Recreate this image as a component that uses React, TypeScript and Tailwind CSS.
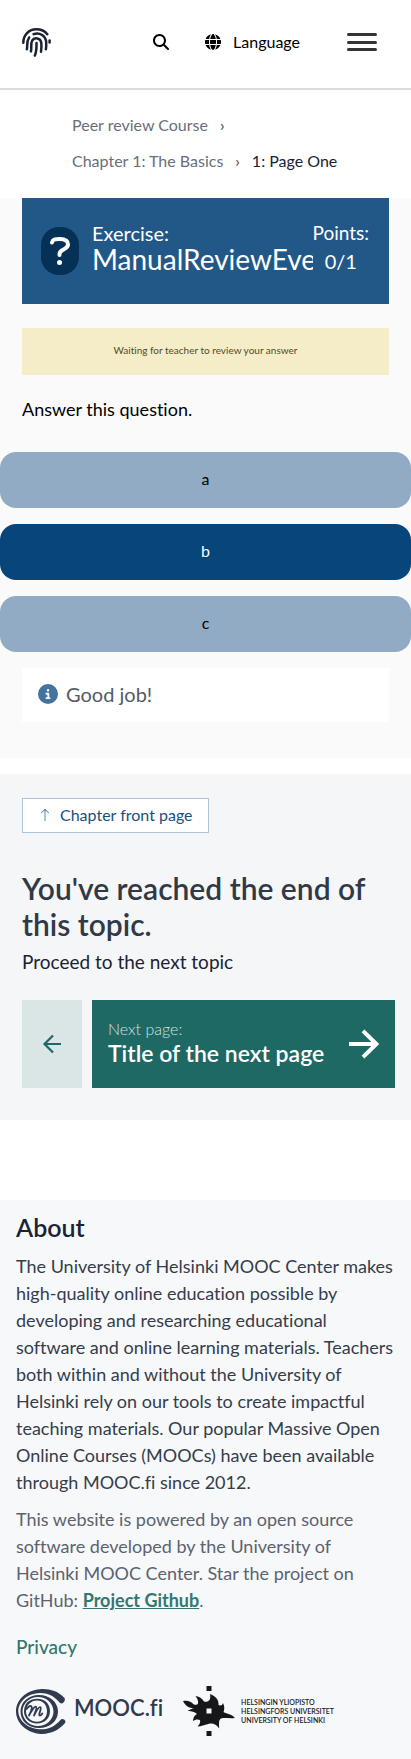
import type { ReactNode } from "react";
import { FaGlobe, FaMagnifyingGlass, FaCircleInfo } from "react-icons/fa6";
import { BsArrowUp } from "react-icons/bs";

const OPTIONS = [
  { label: "a", selected: false },
  { label: "b", selected: true },
  { label: "c", selected: false },
];

function Fingerprint() {
  return (
    <svg width="29" height="29" viewBox="0 0 29 29" fill="none" stroke="#1a2333" strokeWidth="2.5" strokeLinecap="round" aria-hidden="true">
      <path d="M1.3 14.800C1.300 7 6.800 1.300 14.500 1.300c4.400 0 8.200 1.700 10.800 5" />
      <path d="M27.600 12.600v1.800" />
      <path d="M4.900 21.200c.900-3.500-.800-7.400 2.300-11.800" />
      <path d="M11.600 6.100c6.200-2.300 12.300 2 12.600 8.200.1 2.300.1 4.500-.3 6.900" />
      <path d="M8.900 23.400c1.200-4-.8-7.200 1.300-10.900 2.200-3.600 8.600-2.600 9.100 2.300.3 3.200.2 6-.3 8.900" />
      <path d="M12.900 27.600c1.700-4.100 1.700-8 1.600-12.500" />
    </svg>
  );
}

function Arrow({ className, d, viewBox, width }: { className: string; d: string; viewBox: string; width: number }) {
  return (
    <svg className={className} viewBox={viewBox} fill="none" stroke="currentColor" strokeWidth={width} aria-hidden="true">
      <path d={d} />
    </svg>
  );
}

function Crumb({ children }: { children: ReactNode }) {
  return (
    <li className="flex">
      <a href="#" className="text-[#6a6e79]">{children}</a>
      <span className="mx-3 text-[#333a47]">›</span>
    </li>
  );
}

function MoocLogo() {
  return (
    <svg className="h-[45px] w-[50px]" viewBox="0 0 50 45" fill="none" stroke="#313b4f" aria-hidden="true">
      <path fill="#313b4f" stroke="none" d="M48.500 9C42 2 33-.500 24 .200 10 1.300 0 11 0 22.500S11 44.300 25 44.900c9.500.400 18-3.600 24-10.800 1.800-2.600-2.500-5.500-4.600-3.200C39 37 33 40.300 25.500 40.300 13 40.300 3 33 2.300 22.500 2.300 12 12 4.400 24 4c8 0 14 3 19.300 9.300 2 3.200 7-1.200 5.200-4.300z" />
      <path fill="#313b4f" stroke="none" fillRule="evenodd" d="M4.500 22.500C4.500 13 12.500 6 23 6s19 7 19 16.500S34 39 23 39 4.500 32 4.500 22.500zM6.500 22.500C6.500 31 14 37 22 37s15.500-6 15.500-14.500S30 8 22 8 6.500 14 6.500 22.500z" />
      <path fill="#313b4f" stroke="none" fillRule="evenodd" d="M11 13.500C14 10.800 18 9.800 21.500 9.800c7.500 0 12.500 5.200 12.500 12.500S28.500 34.500 21 34.500 8 29 8 22.500c0-3.500 1-6.500 3-9zM10 22.500c0 5.500 5 10.300 11 10.300s10-4.300 10-10.500-4-10.700-10-10.700-11 5-11 10.900z" />
      <path strokeWidth="1.800" strokeLinecap="round" strokeLinejoin="round" d="M10.500 20c1.500-2.500 4-3.800 5-2.500 1.200 1.700-1 6-2.500 9 2-4 5.500-9.500 7-8.700 1.500.800-1 5.700-2 8.700 2-4 5-8.900 6.500-8.200 1.700.800-3 8.200-.500 8.200 1 0 1.800-1 2.300-2" />
    </svg>
  );
}

function HelsinkiFlame() {
  return (
    <svg className="h-[50px] w-[52px]" viewBox="0 0 52 50" fill="#161718" aria-hidden="true">
      <path d="M23.500 0h5v5h-5zM23.500 45h5v5h-5z" />
      <path
        fillRule="evenodd"
        d="M0 15C4 14 8 15 10.500 18.200C12.500 19.200 14.500 19 15 17.500C15.500 15 14.500 12.500 12.500 10C17 10.500 19.500 13 21 15.500C24.500 16.800 28.500 14.500 27 8C33 10.500 36 14 35.500 19C37.500 20 39.300 19.500 40 17C41.800 20 41.500 24 40.500 26C44 28.500 48.500 27.500 51.800 32C47 32.500 44 31.800 39.500 32C35.500 32.800 36 36 36.200 42.500C33.500 38.500 30 37 26 37.800C21 39 18.500 40.500 14.500 40.500C17 38 17.500 36 17 34C14.500 33 12 33.500 10 35C10.500 31 11.500 29.500 14 28C11 25.500 8 24.800 4.500 25C7 23.500 9 22.500 11 22.200C6 22 2.500 20 0 15zM23.500 22.500v5h5v-5z"
      />
    </svg>
  );
}

export default function App() {
  return (
    <div className="min-h-screen bg-white font-['Lato',sans-serif] text-black [font-variant-ligatures:none]">
      <header className="flex h-[90px] items-center border-b-2 border-[#dcdcdc] pr-[34px] pb-1 pl-[22px]">
        <a href="#" aria-label="Home">
          <Fingerprint />
        </a>
        <div className="ml-auto flex items-center">
          <button type="button" aria-label="Search" className="mr-9">
            <FaMagnifyingGlass size={16} />
          </button>
          <button type="button" className="mr-[47px] flex items-center gap-3 text-base">
            <FaGlobe size={16} />
            Language
          </button>
          <button type="button" aria-label="Open menu">
            <svg width="30" height="18" viewBox="0 0 30 18" fill="#333333" aria-hidden="true">
              <rect width="30" height="3" rx="1.500" />
              <rect y="8" width="30" height="3" rx="1.500" />
              <rect y="15" width="30" height="3" rx="1.500" />
            </svg>
          </button>
        </div>
      </header>

      <nav aria-label="Breadcrumb" className="px-[72px] pt-[17px] pb-[19px]">
        <ol className="flex flex-wrap text-base leading-9">
          <Crumb>Peer review Course</Crumb>
          <Crumb>Chapter 1: The Basics</Crumb>
          <li aria-current="page" className="text-[#1a2333]">1: Page One</li>
        </ol>
      </nav>

      <main>
        <section className="bg-[#fafafa] pb-9">
          <div className="mx-[22px] flex h-[106px] items-center bg-[#215887] pr-5 pl-[19px] text-white">
            <div className="flex h-12 w-[38px] shrink-0 items-center justify-center rounded-[18px] bg-[#063157]">
              <svg width="22" height="30" viewBox="0 0 22 30" fill="none" stroke="white" strokeWidth="4" strokeLinecap="round" strokeLinejoin="round" aria-hidden="true">
                <path d="M3 6.500C4 3 7 3 11 3c5 0 8 1.500 8 5.500 0 5.500-8.500 4.500-8.500 9.500v1" />
                <path strokeWidth="5" d="M10.500 26.500h.01" />
              </svg>
            </div>
            <h2 className="ml-[13px] min-w-0 flex-1 overflow-x-clip pb-2 whitespace-nowrap">
              <span className="block text-xl leading-6">Exercise:</span>
              <span className="block text-[28px] leading-7">ManualReviewEve</span>
            </h2>
            <div className="shrink-0 pb-1 text-center">
              <div className="text-[19px] leading-6">Points:</div>
              <div className="text-xl leading-8">0/1</div>
            </div>
          </div>

          <p className="mx-[22px] mt-6 bg-[#f5edc7] pt-3 pb-[14px] text-center text-[10px] leading-[21px] text-[#524b28]">
            Waiting for teacher to review your answer
          </p>
          <p className="mx-[22px] mt-[18px] text-lg leading-8">Answer this question.</p>

          <div className="mt-[27px] flex flex-col gap-4">
            {OPTIONS.map(({ label, selected }) => (
              <button
                key={label}
                type="button"
                aria-pressed={selected}
                className={
                  selected
                    ? "h-14 rounded-2xl bg-[#08457a] pb-[2px] text-base text-white"
                    : "h-14 rounded-2xl bg-[#91abc4] pb-[2px] text-base text-black"
                }
              >
                {label}
              </button>
            ))}
          </div>

          <div className="mx-[22px] mt-4 flex h-[54px] items-center gap-2 bg-white px-4 pb-[2px] text-xl text-[#535a66]">
            <FaCircleInfo size={20} className="text-[#44749e]" />
            <span>Good job!</span>
          </div>
        </section>

        <section className="mt-4 bg-[#f5f6f7] px-[22px] pt-6 pb-8">
          <a href="#" className="inline-flex h-[35px] items-center gap-2 border border-[#adc3d8] bg-white px-[15px] pb-[2px] text-base text-[#1a4f80]">
            <BsArrowUp size={14} className="text-[#44749e]" />
            Chapter front page
          </a>
          <h2 className="mt-[37px] text-3xl leading-9 font-semibold text-[#313947]">
            You've reached the end of this topic.
          </h2>
          <p className="pt-[2px] text-[19px] leading-9 text-[#1a2333]">Proceed to the next topic</p>
          <div className="mt-5 -mr-[6px] flex h-[88px] gap-[10px]">
            <a href="#" aria-label="Previous page" className="flex w-[60px] shrink-0 items-center justify-center bg-[#dae6e5] text-[#1f6964]">
              <Arrow className="size-5" viewBox="0 0 20 20" width={2.2} d="M19 10H2M11 1.500 2.500 10l8.500 8.500" />
            </a>
            <a href="#" className="flex min-w-0 flex-1 items-center justify-between bg-[#1f6964] px-4 text-white">
              <span className="min-w-0 pb-[2px]">
                <span className="block text-base leading-5 font-light text-[#d2e1e0]">Next page:</span>
                <span className="block text-[23px] leading-7 font-semibold">Title of the next page</span>
              </span>
              <Arrow className="size-[30px] shrink-0" viewBox="0 0 30 30" width={4} d="M0 15h27M14 1.800 27.300 15 14 28.200" />
            </a>
          </div>
        </section>
      </main>

      <footer className="mt-20 bg-[#f7f8fa] px-4 pt-[11px] pb-[23px]">
        <h2 className="text-[25px] leading-8 font-semibold text-[#1a2333]">About</h2>
        <p className="mt-[10px] text-lg leading-[27px] text-[#353d4b]">
          The University of Helsinki MOOC Center makes high-quality online education possible by developing and
          researching educational software and online learning materials. Teachers both within and without the
          University of Helsinki rely on our tools to create impactful teaching materials. Our popular Massive Open
          Online Courses (MOOCs) have been available through MOOC.fi since 2012.
        </p>
        <p className="mt-[10px] text-lg leading-[27px] text-[#5c636f]">
          This website is powered by an open source software developed by the University of Helsinki MOOC Center. Star
          the project on GitHub:{" "}
          <a href="#" className="font-bold text-[#35766f] underline">Project Github</a>.
        </p>
        <a href="#" className="mt-[18px] block w-fit text-[19px] leading-[30px] font-medium text-[#35766f]">Privacy</a>
        <div className="mt-6 flex items-center">
          <a href="#" className="flex items-center gap-2 text-[#313b4f]">
            <MoocLogo />
            <span className="pb-2 text-[22px] font-semibold">MOOC.fi</span>
          </a>
          <a href="#" className="ml-5 flex items-center gap-[6px] text-[#161718]">
            <HelsinkiFlame />
            <span className="text-[7px] leading-[9px] font-semibold whitespace-nowrap uppercase">
              Helsingin yliopisto
              <br />
              Helsingfors universitet
              <br />
              University of Helsinki
            </span>
          </a>
        </div>
      </footer>
    </div>
  );
}
